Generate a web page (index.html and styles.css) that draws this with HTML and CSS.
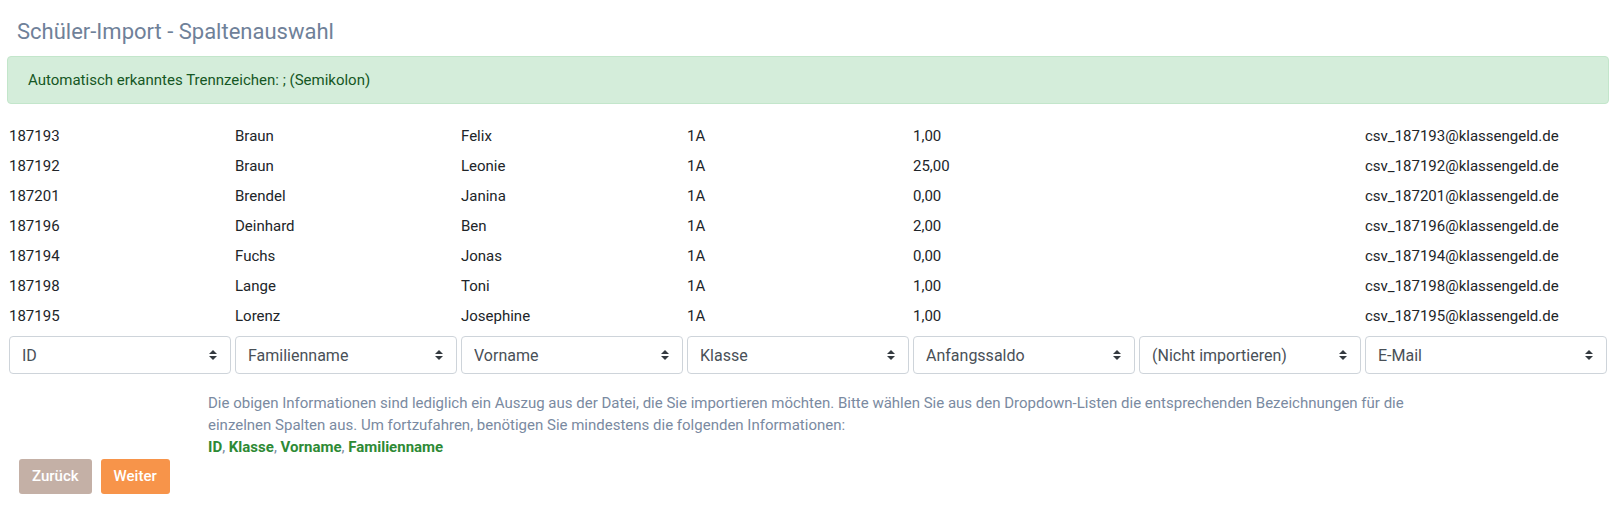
FILE: index.html
```html
<!DOCTYPE html>
<html lang="de">
<head>
  <meta charset="UTF-8" />
  <meta name="viewport" content="width=device-width, initial-scale=1.0" />
  <title>Schüler-Import - Spaltenauswahl</title>
  <link rel="stylesheet" href="styles.css">
</head>
<body>
  <div class="page">
    <h4 class="page-title">Schüler-Import - Spaltenauswahl</h4>

    <div class="alert-success">Automatisch erkanntes Trennzeichen: ; (Semikolon)</div>

    <table class="preview">
      <colgroup>
        <col class="col-std"><col class="col-std"><col class="col-std"><col class="col-std">
        <col class="col-std"><col class="col-std"><col>
      </colgroup>
      <tbody>
        <tr><td>187193</td><td>Braun</td><td>Felix</td><td>1A</td><td>1,00</td><td></td><td>csv_187193@klassengeld.de</td></tr>
        <tr><td>187192</td><td>Braun</td><td>Leonie</td><td>1A</td><td>25,00</td><td></td><td>csv_187192@klassengeld.de</td></tr>
        <tr><td>187201</td><td>Brendel</td><td>Janina</td><td>1A</td><td>0,00</td><td></td><td>csv_187201@klassengeld.de</td></tr>
        <tr><td>187196</td><td>Deinhard</td><td>Ben</td><td>1A</td><td>2,00</td><td></td><td>csv_187196@klassengeld.de</td></tr>
        <tr><td>187194</td><td>Fuchs</td><td>Jonas</td><td>1A</td><td>0,00</td><td></td><td>csv_187194@klassengeld.de</td></tr>
        <tr><td>187198</td><td>Lange</td><td>Toni</td><td>1A</td><td>1,00</td><td></td><td>csv_187198@klassengeld.de</td></tr>
        <tr><td>187195</td><td>Lorenz</td><td>Josephine</td><td>1A</td><td>1,00</td><td></td><td>csv_187195@klassengeld.de</td></tr>
        <tr class="select-row">
          <td><select class="custom-select"><option>ID</option></select></td>
          <td><select class="custom-select"><option>Familienname</option></select></td>
          <td><select class="custom-select"><option>Vorname</option></select></td>
          <td><select class="custom-select"><option>Klasse</option></select></td>
          <td><select class="custom-select"><option>Anfangssaldo</option></select></td>
          <td><select class="custom-select"><option>(Nicht importieren)</option></select></td>
          <td><select class="custom-select"><option>E-Mail</option></select></td>
        </tr>
      </tbody>
    </table>

    <p class="help-text">
      Die obigen Informationen sind lediglich ein Auszug aus der Datei, die Sie importieren möchten. Bitte wählen Sie aus den Dropdown-Listen die entsprechenden Bezeichnungen für die einzelnen Spalten aus. Um fortzufahren, benötigen Sie mindestens die folgenden Informationen:<br>
      <b>ID</b>, <b>Klasse</b>, <b>Vorname</b>, <b>Familienname</b>
    </p>

    <div class="actions">
      <button class="btn btn-back">Zurück</button>
      <button class="btn btn-next">Weiter</button>
    </div>
  </div>
</body>
</html>
```

FILE: styles.css
```css
body {
  margin: 0;
  font-family: Roboto, "Liberation Sans", Arial, sans-serif;
  color: #212529;
  background: #fff;
}
.page {
  padding: 0 13px 0 7px;
}
.page-title {
  margin: 0;
  padding: 19px 0 0 10px;
  font-size: 22px;
  font-weight: 400;
  line-height: 26px;
  color: #6f8199;
}
.alert-success {
  margin-top: 11px;
  padding: 12px 20px;
  font-size: 15px;
  line-height: 22px;
  color: #155724;
  background: #d4edda;
  border: 1px solid #c3e6cb;
  border-radius: 4px;
}
.preview {
  width: 100%;
  margin-top: 17px;
  border-collapse: collapse;
  table-layout: fixed;
}
.preview .col-std {
  width: 226px;
}
.preview td {
  padding: 4px 2px;
  font-size: 15px;
  line-height: 22px;
  white-space: nowrap;
}
.preview .select-row td {
  padding-top: 5px;
}
.custom-select {
  display: block;
  width: 100%;
  height: 38px;
  padding: 6px 28px 6px 12px;
  font-family: inherit;
  font-size: 16px;
  color: #495057;
  background: #fff url("data:image/svg+xml,%3csvg xmlns='http://www.w3.org/2000/svg' width='8' height='10' viewBox='0 0 8 10'%3e%3cpath fill='%23343a40' d='M4 0L0 4h8zM4 10L0 6h8z'/%3e%3c/svg%3e") no-repeat right 13px center;
  border: 1px solid #ced4da;
  border-radius: 4px;
  appearance: none;
  -webkit-appearance: none;
}
.help-text {
  margin: 14px 0 0 201px;
  max-width: 1210px;
  font-size: 15px;
  line-height: 22px;
  color: #7a8aa1;
}
.help-text b {
  color: #2e8a35;
}
.actions {
  display: flex;
  gap: 9px;
  margin: 1px 0 0 12px;
}
.btn {
  padding: 8px 13px;
  font-family: inherit;
  font-size: 15px;
  font-weight: 500;
  line-height: 19px;
  color: #fff;
  border: none;
  border-radius: 3px;
}
.btn-back {
  background: #c4b0a6;
}
.btn-next {
  background: #f7944a;
}
```
